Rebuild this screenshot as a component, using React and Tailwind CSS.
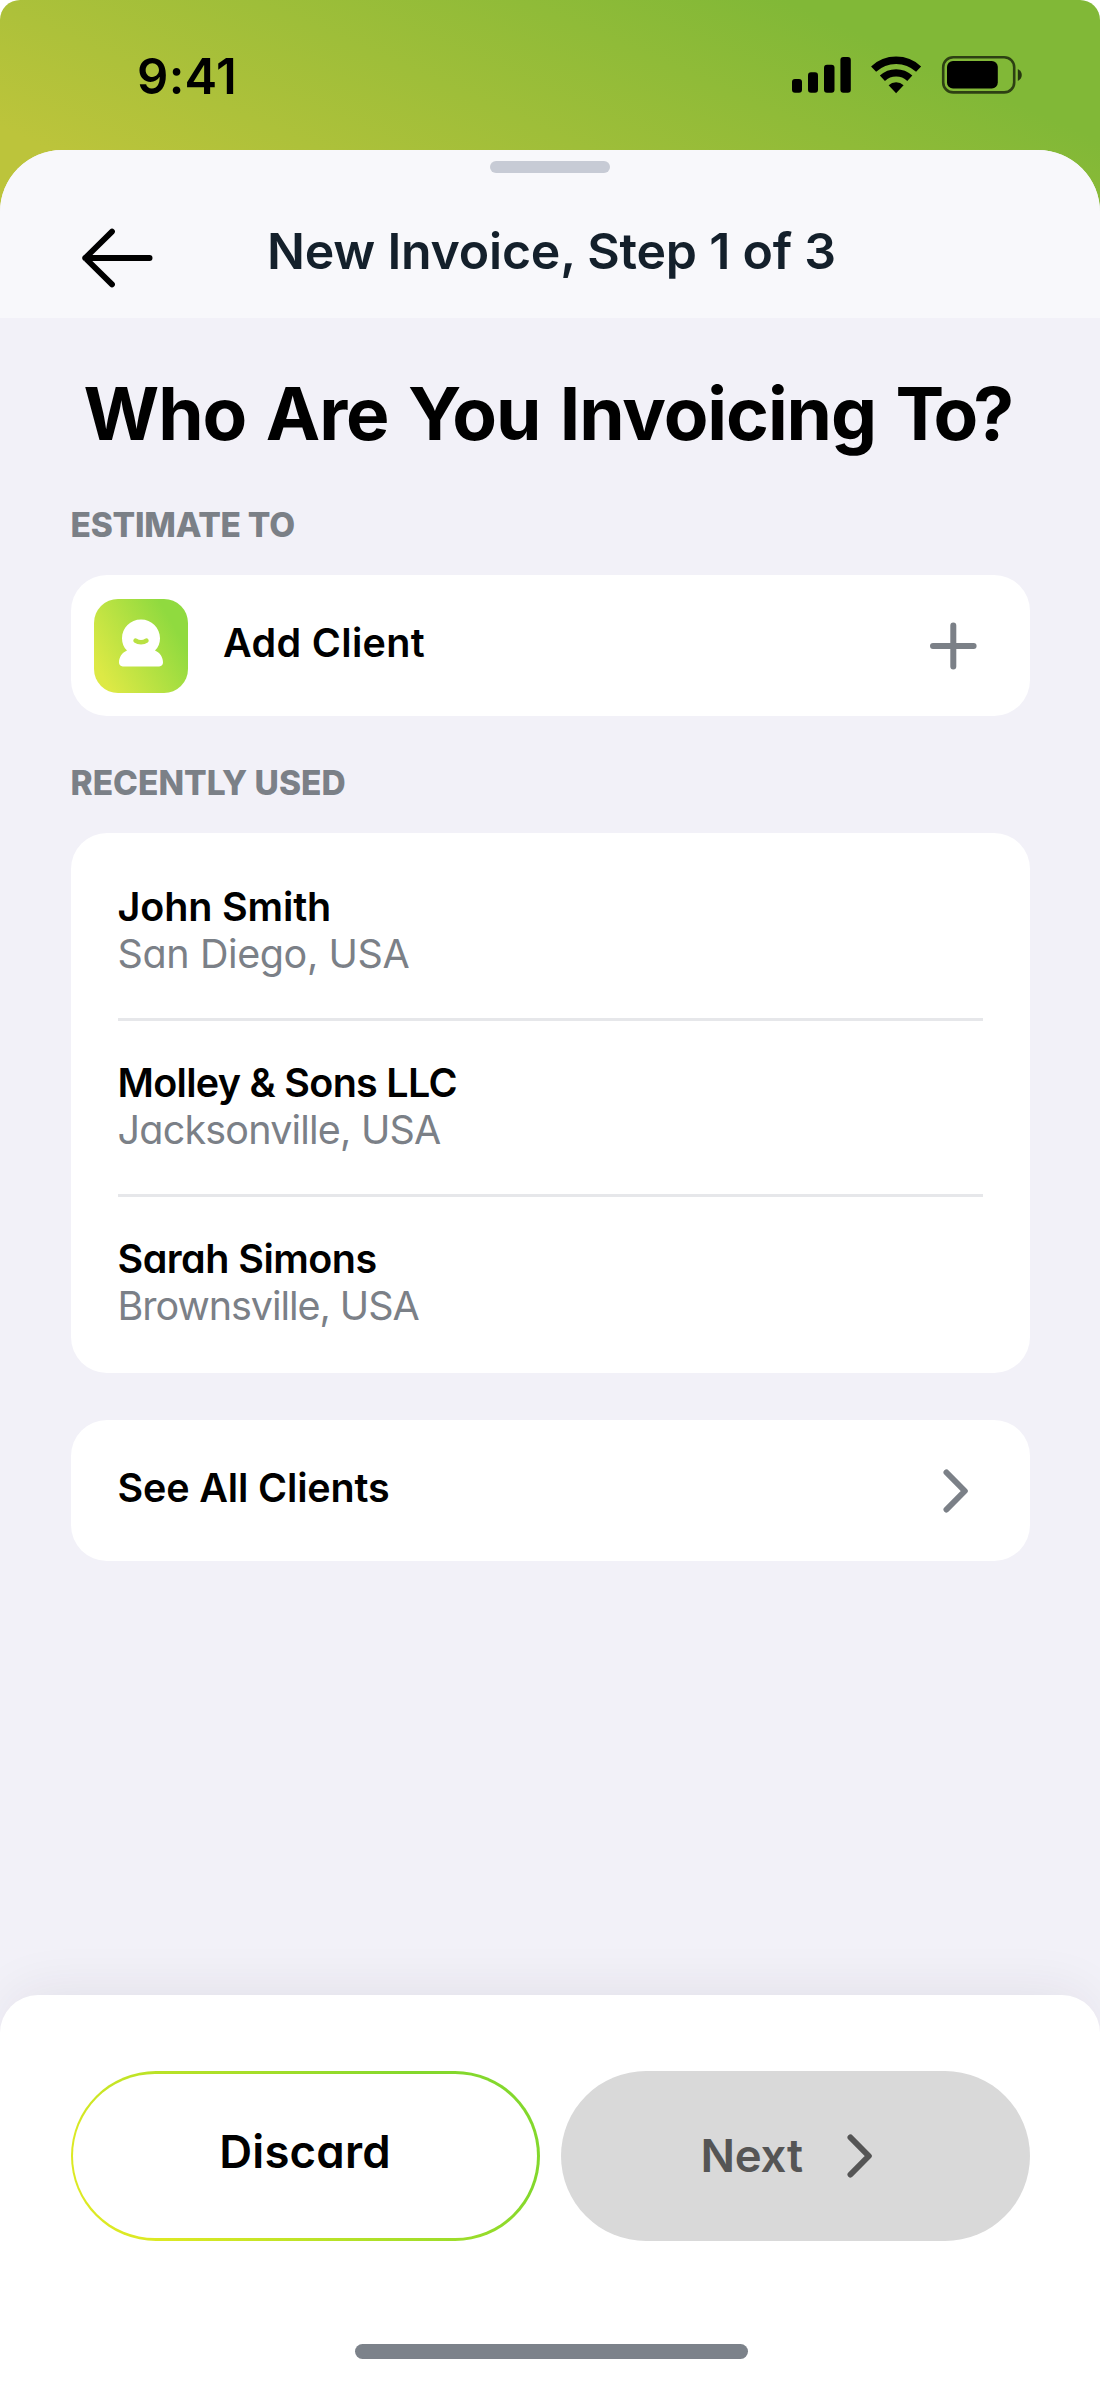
import React from "react";

const clients = [
  {
    name: "John Smith",
    city: "San Diego, USA",
    nameStyle: "tracking-[-0.15px]",
    cityStyle: "tracking-[-0.4px]",
  },
  {
    name: "Molley & Sons LLC",
    city: "Jacksonville, USA",
    nameStyle: "tracking-[-0.7px]",
    cityStyle: "tracking-[-0.8px]",
  },
  {
    name: "Sarah Simons",
    city: "Brownsville, USA",
    nameStyle: "tracking-[-0.53px]",
    cityStyle: "tracking-[-1.05px]",
  },
];

const StatusBar = () => {
  return (
    <div className="h-[226px] rounded-t-[20px] bg-[linear-gradient(24deg,#bcc43b_90px,#81b837_526px)]">
      <div className="flex items-start justify-between pl-[137px] pr-[78px] pt-[47px]">
        <span className="text-[49px] leading-[60px] font-semibold text-black tracking-[0.3px]">
          9:41
        </span>
        <svg className="mt-2" width="231" height="40" viewBox="0 0 231 40">
          <rect x="1" y="24" width="10" height="13.7" rx="3" />
          <rect x="17" y="17.3" width="10" height="20.4" rx="3" />
          <rect x="33" y="9.7" width="10.5" height="28" rx="3" />
          <rect x="49.4" y="2" width="10.4" height="35.7" rx="3" />
          <g fill="none" stroke="#000">
            <path d="M82.6 14.1A33 33 0 0 1 127.6 14.1" strokeWidth="7.4" />
            <path d="M91.4 23.3A20 20 0 0 1 118.8 23.3" strokeWidth="7.4" />
          </g>
          <path d="M105.1 38.3L97.6 30.2A11 11 0 0 1 112.6 30.2Z" />
          <rect
            x="152.2"
            y="2.2"
            width="71"
            height="35.2"
            rx="10"
            fill="none"
            stroke="#000"
            strokeOpacity="0.65"
            strokeWidth="2.6"
          />
          <rect x="156" y="6" width="50.8" height="27.4" rx="6" />
          <path d="M226.8 14V26Q230.8 23.8 230.8 20T226.8 14Z" fillOpacity="0.7" />
        </svg>
      </div>
    </div>
  );
};

const Chevron = ({ className }) => {
  return (
    <svg
      className={className}
      width="26"
      height="44"
      viewBox="0 0 26 44"
      fill="none"
      stroke="currentColor"
      strokeWidth="6"
      strokeLinecap="round"
      strokeLinejoin="round"
    >
      <path d="M3.5 3.5L21.8 22L3.5 40.5" />
    </svg>
  );
};

const SheetHeader = () => {
  return (
    <div className="h-[168px] rounded-t-[62px] bg-[#f8f8fb] pt-[11px]">
      <div className="mx-auto h-3 w-[120px] rounded-full bg-[#c7cbd5]"></div>
      <div className="mt-7 flex h-[100px] items-center pl-[82px]">
        <svg
          className="mt-[14px] shrink-0"
          width="71"
          height="60"
          viewBox="0 0 71 60"
          fill="none"
          stroke="#000"
          strokeWidth="5.8"
          strokeLinecap="round"
          strokeLinejoin="round"
        >
          <path d="M30 3.6L3.2 30L30 56.4M3.2 30H67.6" />
        </svg>
        <h2 className="ml-[114px] text-[50px] leading-[60px] font-semibold whitespace-nowrap text-[#14202b] tracking-[-0.22px]">
          New Invoice, Step 1 of 3
        </h2>
      </div>
    </div>
  );
};

const AddClient = () => {
  return (
    <div className="mt-[30px] flex h-[141px] items-center rounded-[36px] bg-white pl-[23px] pr-[53px]">
      <div className="flex h-[94px] w-[94px] shrink-0 items-center justify-center rounded-[24px] bg-[linear-gradient(60deg,#dde945_12%,#90da3f_80%)] pb-[5px]">
        <svg width="46" height="48" viewBox="0 0 46 48">
          <path
            d="M23 0.4C33.6 0.4 42 8.6 42 19.2C42 24 40.4 28.2 37 31.6C42 33.6 45 38.4 45 43.6C45 46 43.6 47.4 41.2 47.4H4.8C2.4 47.4 1 46 1 43.6C1 38.4 4 33.6 9 31.6C5.6 28.2 4 24 4 19.2C4 8.6 12.4 0.4 23 0.4Z"
            fill="#fff"
          />
          <path
            d="M17.6 21.6C20.6 23.8 25.4 23.8 28.4 21.6"
            fill="none"
            stroke="#b9e142"
            strokeWidth="4.6"
            strokeLinecap="round"
          />
        </svg>
      </div>
      <span className="-mt-[5px] ml-[35.5px] text-[39.5px] leading-[47px] font-semibold text-black tracking-[0.35px]">
        Add Client
      </span>
      <svg
        className="ml-auto"
        width="48"
        height="48"
        viewBox="0 0 48 48"
        stroke="#7b8087"
        strokeWidth="6"
        strokeLinecap="round"
      >
        <path d="M24.3 3.6V44.4M4 24H44.6" />
      </svg>
    </div>
  );
};

const ClientList = () => {
  return (
    <div className="mt-[30px] h-[540px] rounded-[36px] bg-white px-[47px] pt-3">
      {clients.map((client, i) => (
        <div
          key={client.name}
          className={
            i === 0 ? "pt-[39px] pb-[40px]" : "border-t-3 border-[#e6e7ea] pt-[39px] pb-[40px]"
          }
        >
          <h4
            className={`text-[39.5px] leading-[47px] font-semibold text-black ${client.nameStyle}`}
          >
            {client.name}
          </h4>
          <p className={`text-[39.5px] leading-[47px] text-[#7b8087] ${client.cityStyle}`}>
            {client.city}
          </p>
        </div>
      ))}
    </div>
  );
};

const Footer = () => {
  return (
    <div className="h-[387px] rounded-t-[38px] bg-white px-[70.5px] pt-[76px] shadow-[0_-12px_56px_-12px_rgba(40,35,60,0.09)]">
      <div className="grid grid-cols-2 gap-[21px]">
        <button className="h-[170px] rounded-full bg-[linear-gradient(45deg,#dce923_15%,#83d82c_80%)] p-[2.7px]">
          <span className="flex h-full items-center justify-center rounded-full bg-white pb-[8px] text-[45.5px] font-semibold text-black tracking-[0.2px]">
            Discard
          </span>
        </button>
        <button className="flex h-[170px] items-center rounded-full bg-[#d9d9d9] pl-[140px] text-[#555555]">
          <span className="w-[146px] text-left text-[45.5px] font-semibold tracking-[-0.2px]">
            Next
          </span>
          <Chevron />
        </button>
      </div>
      <div className="mt-[103px] ml-[284.5px] h-[14.5px] w-[393px] rounded-full bg-[#7c828a]"></div>
    </div>
  );
};

const App = () => {
  return (
    <div className="flex h-[2382px] w-[1100px] flex-col overflow-hidden bg-white font-['Inter',sans-serif] [font-feature-settings:'cv11'] select-none">
      <StatusBar />

      <div className="-mt-[76px] flex flex-1 flex-col rounded-t-[62px] bg-[#f2f1f8]">
        <SheetHeader />

        <div className="flex-1 px-[70.5px] pt-[55px]">
          <h1 className="ml-[13px] text-[73px] leading-[82px] font-bold whitespace-nowrap text-black tracking-[-1.1px] [word-spacing:3.4px]">
            Who Are You Invoicing <span className="tracking-[-5px]">To?</span>
          </h1>

          <p className="mt-[50px] text-[33.5px] leading-[40px] font-extrabold text-[#7b8087] tracking-[-0.25px]">
            ESTIMATE TO
          </p>
          <AddClient />

          <p className="mt-[47px] text-[33.5px] leading-[40px] font-extrabold text-[#7b8087] tracking-[0px]">
            RECENTLY USED
          </p>
          <ClientList />

          <div className="mt-[47px] flex h-[141px] items-center justify-between rounded-[36px] bg-white pr-[61px] pl-[47px]">
            <span className="-mt-[5px] text-[39.5px] leading-[47px] font-semibold text-black tracking-[-0.15px]">
              See All Clients
            </span>
            <Chevron className="text-[#7b8087]" />
          </div>
        </div>

        <Footer />
      </div>
    </div>
  );
};

export default App;
